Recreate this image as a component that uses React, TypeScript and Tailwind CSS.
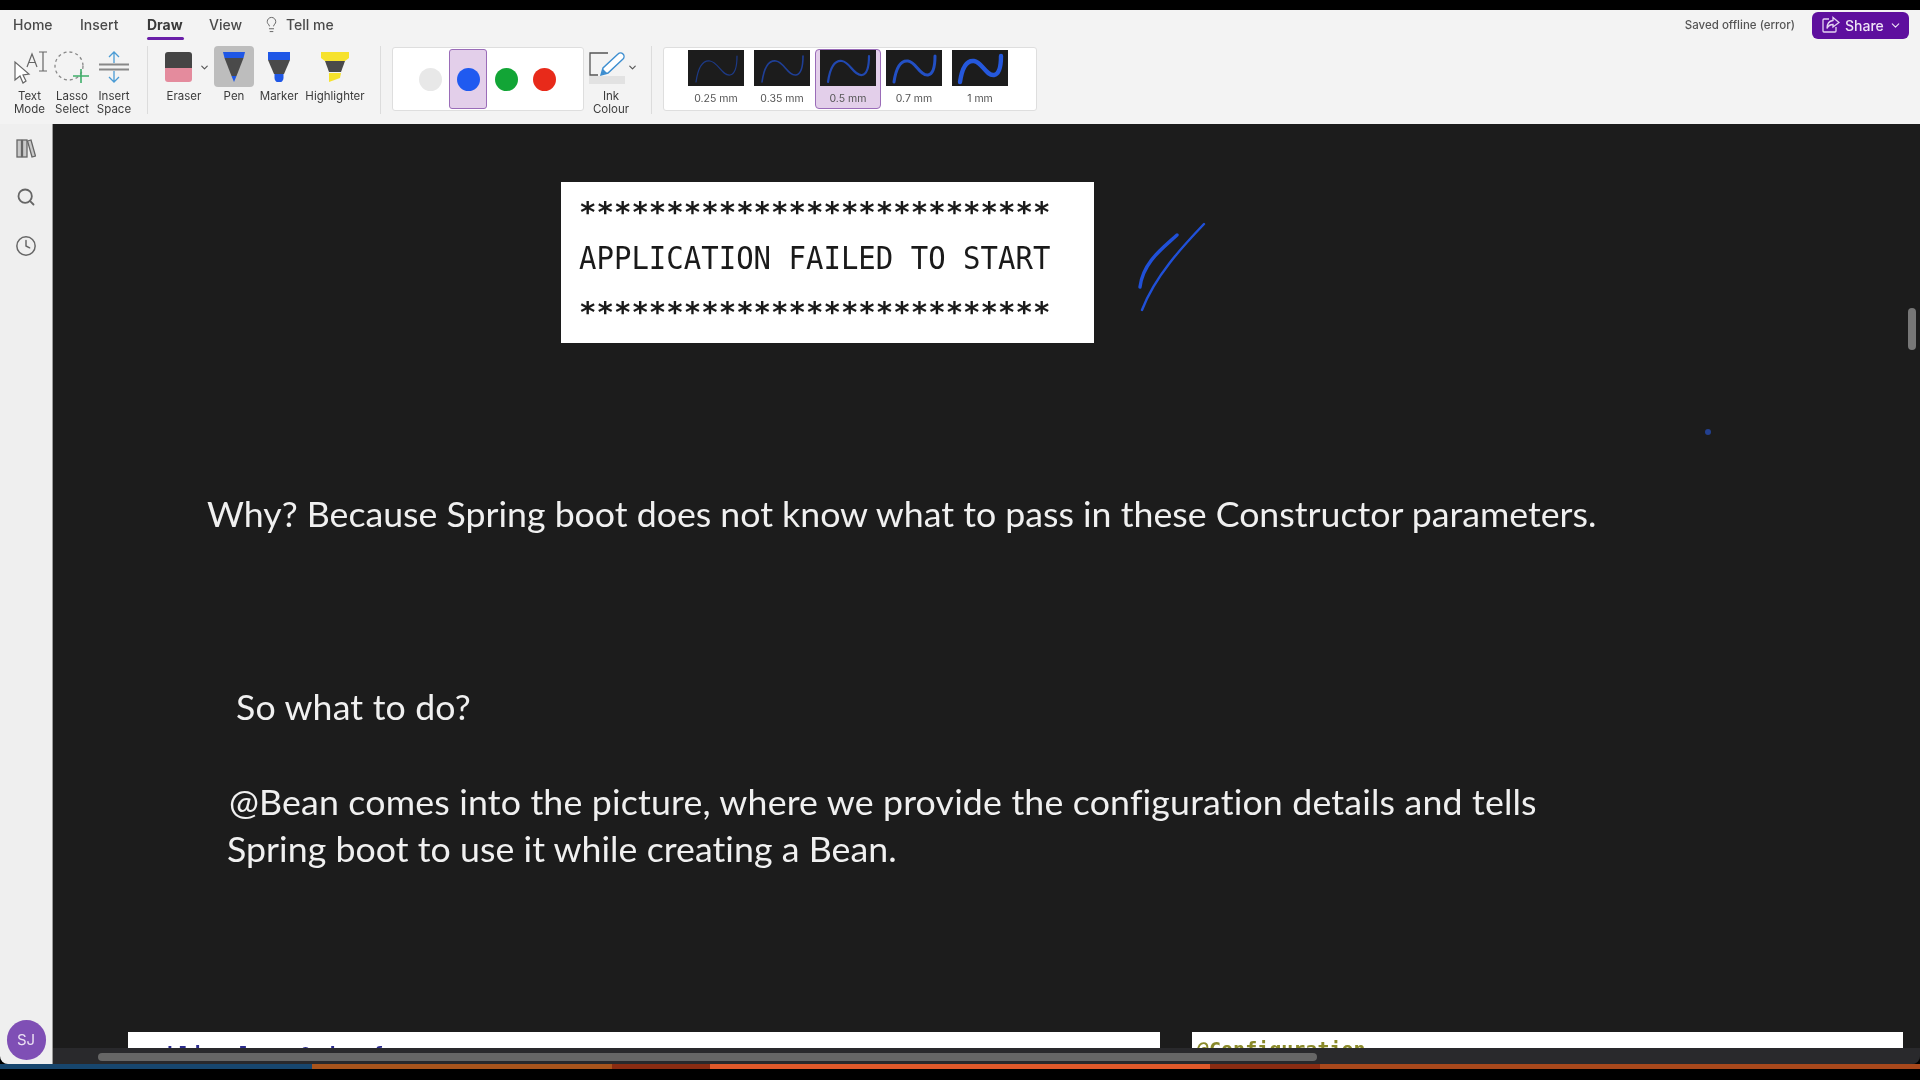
import { ChevronDown, Clock, Lightbulb, Search } from "lucide-react";

const ui = "font-['Inter','Liberation_Sans',sans-serif]";
const note = "font-['Lato','Open_Sans',sans-serif]";
const mono = "font-['DejaVu_Sans_Mono',monospace]";

function ToolLabel({ children }: { children: React.ReactNode }) {
    return (
        <div className="text-[11.5px] leading-[13px] text-[#3c3c3c] text-center">
            {children}
        </div>
    );
}

function TextModeIcon() {
    return (
        <svg width="34" height="34" viewBox="0 0 34 34" fill="none" stroke="#666" strokeWidth="1.2">
            <path d="M2 12 L2 30 L7 26 L10 33 L13 31 L10 25 L16 24 Z" fill="#fff" />
            <path d="M14 17 L19 4 L24 17 M16 12.5 L22 12.5" />
            <path d="M26 2 L34 2 M30 2 L30 21 M26 21 L34 21" />
        </svg>
    );
}

function LassoIcon() {
    return (
        <svg width="36" height="34" viewBox="0 0 36 34" fill="none">
            <circle cx="15" cy="16" r="14" stroke="#888" strokeWidth="1.3" strokeDasharray="3 3" />
            <path d="M27 19 L27 33 M19 26 L35 26" stroke="#3fae6a" strokeWidth="1.6" />
        </svg>
    );
}

function InsertSpaceIcon() {
    return (
        <svg width="32" height="34" viewBox="0 0 32 34" fill="none">
            <path d="M16 2 L16 13 M16 21 L16 32 M11 7 L16 2 L21 7 M11 27 L16 32 L21 27" stroke="#4a9bd4" strokeWidth="1.3" />
            <path d="M1 14.5 L31 14.5 M1 19.5 L31 19.5" stroke="#888" strokeWidth="2" />
        </svg>
    );
}

function EraserIcon() {
    return (
        <div className="w-[27px] h-[30px] rounded-[3px] overflow-hidden flex flex-col">
            <div className="h-[16px] bg-[#454545]" />
            <div className="h-[14px] bg-[#e48b9d]" />
        </div>
    );
}

function PenIcon() {
    return (
        <svg width="22" height="30" viewBox="0 0 22 30">
            <path d="M0 0 L22 0 L20.5 6 L1.5 6 Z" fill="#1f57e6" />
            <path d="M1.5 6 L20.5 6 L13.5 24 L8.5 24 Z" fill="#4a4a4a" />
            <path d="M8.5 24 L13.5 24 L11 30 Z" fill="#1f57e6" />
        </svg>
    );
}

function MarkerIcon() {
    return (
        <svg width="24" height="30" viewBox="0 0 24 30">
            <path d="M1 0 L23 0 L23 8 L1 8 Z" fill="#1f57e6" />
            <path d="M1 8 L23 8 L17 22 L7 22 Z" fill="#4a4a4a" />
            <path d="M7.5 22 L16.5 22 L16.5 26 A4.5 4.5 0 0 1 7.5 26 Z" fill="#1f57e6" />
        </svg>
    );
}

function HighlighterIcon() {
    return (
        <svg width="28" height="30" viewBox="0 0 28 30">
            <path d="M0 0 L28 0 L28 6 L24 9 L4 9 L0 6 Z" fill="#f6e22c" />
            <path d="M4 9 L24 9 L20 20 L8 20 Z" fill="#4a4a4a" />
            <path d="M8 21 L20 21 L19 26 L8 30 Z" fill="#f6e22c" />
        </svg>
    );
}

function InkColourIcon() {
    return (
        <svg width="36" height="24" viewBox="0 0 36 24" fill="none">
            <path d="M19 1 L1 1 L1 23 L9 23" stroke="#555" strokeWidth="1.3" />
            <path d="M12 23 L14 16 L29 2 A2.5 2.5 0 0 1 34 7 L19 21 Z" fill="#fff" stroke="#3d8ed0" strokeWidth="1.4" />
            <path d="M12 23 L14 17 L18 21 Z" fill="#3d8ed0" />
        </svg>
    );
}

function ShareIcon() {
    return (
        <svg width="18" height="18" viewBox="0 0 18 18" fill="none" stroke="#e5d4f2" strokeWidth="1.3">
            <path d="M7 3 L2 3 A1 1 0 0 0 1 4 L1 15 A1 1 0 0 0 2 16 L13 16 A1 1 0 0 0 14 15 L14 11" />
            <path d="M11 1.5 L17 6.5 L11 11 L11 8.5 C8 8.5 6 10 5 12.5 C5 8 7 5 11 4.5 Z" />
        </svg>
    );
}

function LibraryIcon() {
    return (
        <svg width="20" height="20" viewBox="0 0 20 20" fill="#c9c9c9" stroke="#666" strokeWidth="1.3">
            <rect x="1" y="1" width="4.5" height="17" />
            <rect x="6.5" y="1" width="4.5" height="17" />
            <path d="M11.5 2 L15 1 L19.5 17 L16 18 Z" />
        </svg>
    );
}

function Swatch({ label, stroke, width, selected }: { label: string; stroke: string; width: number; selected?: boolean }) {
    return (
        <div
            className={
                selected
                    ? "w-[66px] h-[60px] mx-[-5px] flex flex-col items-center rounded-[4px] border border-[#9a6cb8] bg-[#e3cfea]"
                    : "w-[56px] h-[60px] flex flex-col items-center border border-transparent"
            }
        >
            <svg width="56" height="36" viewBox="0 0 56 36" className="bg-[#1c1c1c]">
                <path
                    d="M8 32 C10 18 14 10 22 11 C30 12 34 26 42 25 C48 24 49 14 49 6"
                    fill="none"
                    stroke={stroke}
                    strokeWidth={width}
                    strokeLinecap="round"
                />
            </svg>
            <div className="mt-[6px] text-[10.5px] leading-[13px] text-[#555]">{label}</div>
        </div>
    );
}

function Dot({ color, selected }: { color: string; selected?: boolean }) {
    return (
        <div
            className={
                selected
                    ? "w-[38px] h-[60px] flex items-center justify-center rounded-[3px] border border-[#9a6cb8] bg-[#e3cfea]"
                    : "w-[38px] h-[60px] flex items-center justify-center"
            }
        >
            <div className="w-[23px] h-[23px] rounded-full" style={{ backgroundColor: color }} />
        </div>
    );
}

function Divider() {
    return <div className="w-px h-[68px] bg-[#dcdcdc]" />;
}

export default function App() {
    return (
        <div className={`w-[1920px] h-[1080px] bg-black overflow-hidden flex flex-col pt-[10px] blur-[0.4px] ${ui}`}>
            {/* tabs + ribbon */}
            <div className="h-[114px] bg-[#f3f3f3] flex flex-col relative">
                <div className="h-[32px] flex items-center pb-[4px] pl-[13px] text-[14px] font-medium text-[#4a4a4a]">
                    <span className="w-[67px]">Home</span>
                    <span className="w-[67px]">Insert</span>
                    <span className="w-[62px] font-bold text-[#3a3a3a] relative">
                        Draw
                        <span className="absolute left-0 top-[23px] w-[37px] h-[3px] rounded-full bg-[#6a1fa8]" />
                    </span>
                    <span className="w-[54px]">View</span>
                    <Lightbulb size={17} strokeWidth={1.4} className="text-[#666]" />
                    <span className="ml-[6px]">Tell me</span>
                    <span className="ml-auto mt-[4px] text-[11.5px] font-medium text-[#555]">Saved offline (error)</span>
                    <div className="ml-[17px] mr-[11px] mt-[2px] w-[97px] h-[27px] rounded-[6px] bg-[#5e0f9e] flex items-center pl-[10px] text-[#efe4f6] text-[14px]">
                        <ShareIcon />
                        <span className="ml-[5px]">Share</span>
                        <ChevronDown size={13} className="ml-[5px]" />
                    </div>
                </div>
                <div className="flex items-start h-[82px] pt-[4px]">
                    <div className="w-[147px] flex pl-[8px]">
                        <div className="w-[43px] flex flex-col items-center pt-[4px]">
                            <TextModeIcon />
                            <div className="mt-[6px]"><ToolLabel>Text<br />Mode</ToolLabel></div>
                        </div>
                        <div className="w-[42px] flex flex-col items-center pt-[4px]">
                            <LassoIcon />
                            <div className="mt-[6px]"><ToolLabel>Lasso<br />Select</ToolLabel></div>
                        </div>
                        <div className="w-[42px] flex flex-col items-center pt-[4px]">
                            <InsertSpaceIcon />
                            <div className="mt-[6px]"><ToolLabel>Insert<br />Space</ToolLabel></div>
                        </div>
                    </div>
                    <Divider />
                    <div className="w-[232px] flex pl-[17px]">
                        <div className="w-[49px] flex flex-col items-center pt-[6px]">
                            <div className="flex items-center w-full relative">
                                <EraserIcon />
                                <ChevronDown size={11} strokeWidth={2.5} className="ml-[7px] text-[#555]" />
                            </div>
                            <div className="mt-[8px] -ml-[11px]"><ToolLabel>Eraser</ToolLabel></div>
                        </div>
                        <div className="w-[40px] flex flex-col items-center">
                            <div className="w-[40px] h-[41px] rounded-[4px] bg-[#bdbdbd] flex items-center justify-center">
                                <PenIcon />
                            </div>
                            <div className="mt-[3px]"><ToolLabel>Pen</ToolLabel></div>
                        </div>
                        <div className="w-[48px] ml-[1px] flex flex-col items-center pt-[6px]">
                            <MarkerIcon />
                            <div className="mt-[8px]"><ToolLabel>Marker</ToolLabel></div>
                        </div>
                        <div className="w-[64px] flex flex-col items-center pt-[6px]">
                            <HighlighterIcon />
                            <div className="mt-[8px]"><ToolLabel>Highlighter</ToolLabel></div>
                        </div>
                    </div>
                    <Divider />
                    <div className="ml-[11px] w-[192px] h-[64px] mt-[1px] rounded-[3px] border border-[#dedede] bg-white flex items-center pl-[18px]">
                        <Dot color="#e8e8e8" />
                        <Dot color="#1f5af0" selected />
                        <Dot color="#12a536" />
                        <Dot color="#e82a1a" />
                    </div>
                    <div className="w-[67px] pr-[13px] flex flex-col items-center pt-[6px]">
                        <div className="flex flex-col w-[36px] -ml-[8px] relative">
                            <InkColourIcon />
                            <div className="w-[36px] h-[8px] bg-[#e2e2e2]" />
                            <ChevronDown size={11} strokeWidth={2.5} className="absolute left-[38px] top-[10px] text-[#555]" />
                        </div>
                        <div className="mt-[6px]"><ToolLabel>Ink<br />Colour</ToolLabel></div>
                    </div>
                    <Divider />
                    <div className="ml-[11px] w-[374px] h-[64px] mt-[1px] rounded-[3px] border border-[#dedede] bg-white flex items-center pl-[24px] gap-[10px]">
                        <Swatch label="0.25 mm" stroke="#1d3a86" width={1.2} />
                        <Swatch label="0.35 mm" stroke="#1f3f96" width={1.6} />
                        <Swatch label="0.5 mm" stroke="#2148b0" width={2.2} selected />
                        <Swatch label="0.7 mm" stroke="#2350c4" width={3} />
                        <Swatch label="1 mm" stroke="#2558dc" width={4.4} />
                    </div>
                </div>
            </div>

            {/* sidebar + page */}
            <div className="h-[940px] flex">
                <div className="w-[53px] bg-[#efefef] flex flex-col items-center rounded-bl-[8px] border-r border-[#9a9a9a]">
                    <div className="mt-[15px]"><LibraryIcon /></div>
                    <Search size={20} strokeWidth={2.2} className="mt-[28px] text-[#666]" />
                    <Clock size={22} strokeWidth={1.6} className="mt-[28px] text-[#666]" />
                    <div className="mt-auto mb-[4px] w-[39px] h-[40px] rounded-full bg-[#7f4fb5] flex items-center justify-center text-[15px] text-[#ece2f4]">
                        SJ
                    </div>
                </div>
                <div className="w-[1867px] bg-[#1c1c1c] flex flex-col relative rounded-br-[8px] overflow-hidden">
                    <div className={`ml-[508px] mt-[58px] w-[533px] h-[161px] bg-white pl-[18px] pt-[1px] text-[29px] leading-[50px] text-[#1a1a1a] ${mono}`}>
                        <div className="h-[50px] pt-[4px] font-bold">***************************</div>
                        <div className="h-[50px] scale-y-[1.1] origin-center">APPLICATION FAILED TO START</div>
                        <div className="h-[50px] pt-[4px] font-bold">***************************</div>
                    </div>
                    <div className={`ml-[154px] mt-[147px] text-[35.7px] leading-[47px] text-[#f0f0f0] ${note}`}>
                        Why? Because Spring boot does not know what to pass in these Constructor parameters.
                    </div>
                    <div className={`ml-[183px] mt-[146px] text-[35.7px] leading-[47px] tracking-[0.17px] text-[#f0f0f0] ${note}`}>
                        So what to do?
                    </div>
                    <div className={`ml-[176px] mt-[48px] text-[35.7px] leading-[47px] tracking-[0.18px] text-[#f0f0f0] ${note}`}>
                        @Bean comes into the picture, where we provide the configuration details and tells
                    </div>
                    <div className={`ml-[174px] text-[35.7px] leading-[47px] tracking-[0.05px] text-[#f0f0f0] ${note}`}>
                        Spring boot to use it while creating a Bean.
                    </div>

                    <div className="mt-auto flex h-[16px] ml-[75px] gap-[32px]">
                        <div className={`w-[1032px] bg-white overflow-hidden pl-[15px] pt-[10px] text-[20px] leading-[24px] font-bold text-[#2b2b8c] ${mono}`}>
                            public class Order {"{"}
                        </div>
                        <div className={`w-[711px] bg-white overflow-hidden pl-[5px] pt-[5px] text-[20px] leading-[24px] font-bold text-[#8a8a2a] ${mono}`}>
                            @Configuration
                        </div>
                    </div>
                    <div className="h-[16px] bg-[#29292c] pl-[45px] pt-[5px]">
                        <div className="w-[1219px] h-[8px] rounded-full bg-[#666]" />
                    </div>

                    {/* ink strokes on the page */}
                    <svg className="absolute left-[1080px] top-[90px]" width="140" height="110" viewBox="0 0 140 110" fill="none" stroke="#2050d8" strokeLinecap="round">
                        <path d="M44 21 C30 34 10 48 7 73" strokeWidth="3.4" />
                        <path d="M71 10 C50 32 22 62 9 96" strokeWidth="2.4" />
                    </svg>
                    <div className="absolute left-[1652px] top-[305px] w-[6px] h-[6px] rounded-full bg-[#23408f]" />
                    <div className="absolute left-[1855px] top-[184px] w-[8px] h-[42px] rounded-full bg-[#777]" />
                </div>
            </div>

            {/* strip of the desktop behind the window */}
            <div className="h-[5px] flex">
                <div className="w-[312px] bg-[#17466e]" />
                <div className="w-[300px] bg-[#a8541c]" />
                <div className="w-[98px] bg-[#8a2c12]" />
                <div className="w-[500px] bg-[#e0592a]" />
                <div className="w-[110px] bg-[#8a2c12]" />
                <div className="flex-1 bg-[#a8481c]" />
            </div>
        </div>
    );
}
